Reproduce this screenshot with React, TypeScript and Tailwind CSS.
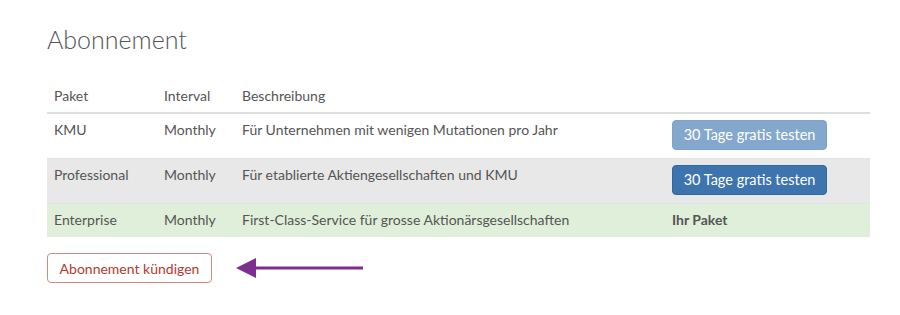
const plans = [
  {
    name: "KMU",
    interval: "Monthly",
    description: "Für Unternehmen mit wenigen Mutationen pro Jahr",
    action: "faded",
  },
  {
    name: "Professional",
    interval: "Monthly",
    description: "Für etablierte Aktiengesellschaften und KMU",
    action: "button",
  },
  {
    name: "Enterprise",
    interval: "Monthly",
    description: "First-Class-Service für grosse Aktionärsgesellschaften",
    action: "current",
  },
];

const rowBg: Record<string, string> = {
  faded: "bg-white",
  button: "bg-[#e8e8e8]",
  current: "bg-[#e0efd9]",
};

export default function App() {
  return (
    <div
      className="min-h-[315px] w-[900px] bg-white px-[47px] pt-[22px] text-[14px] text-[#555]"
      style={{ fontFamily: "Lato, 'Open Sans', sans-serif" }}
    >
      <h1 className="text-[25px] font-light leading-[34px] text-[#555]">Abonnement</h1>

      <table className="mt-[22px] w-[823px] table-fixed border-collapse">
        <colgroup>
          <col className="w-[110px]" />
          <col className="w-[78px]" />
          <col className="w-[430px]" />
          <col />
        </colgroup>
        <thead>
          <tr className="border-b-2 border-[#dedede]">
            <th className="px-[7px] pt-[9px] pb-[7px] text-left font-normal leading-[18px]">Paket</th>
            <th className="px-[7px] pt-[9px] pb-[7px] text-left font-normal leading-[18px]">Interval</th>
            <th className="px-[7px] pt-[9px] pb-[7px] text-left font-normal leading-[18px]">Beschreibung</th>
            <th />
          </tr>
        </thead>
        <tbody>
          {plans.map((plan) => (
            <tr key={plan.name} className={`${rowBg[plan.action]} border-t border-[#e3e3e3] align-top`}>
              <td className="px-[7px] py-[7px] leading-[18px]">{plan.name}</td>
              <td className="px-[7px] py-[7px] leading-[18px]">{plan.interval}</td>
              <td className="px-[7px] py-[7px] leading-[18px]">{plan.description}</td>
              <td className="px-[7px] pt-[6px] pb-[8px] leading-[18px]">
                {plan.action === "current" ? (
                  <span className="inline-block pt-px font-bold">Ihr Paket</span>
                ) : (
                  <button
                    className={`h-[30px] w-[155px] rounded-[4px] border text-[14.5px] text-white ${
                      plan.action === "faded"
                        ? "border-[#7ea3ca] bg-[#84a8cd]"
                        : "border-[#2f689f] bg-[#3e74ad]"
                    }`}
                  >
                    30 Tage gratis testen
                  </button>
                )}
              </td>
            </tr>
          ))}
        </tbody>
      </table>

      {/* cancel + pointer arrow */}
      <div className="mt-[16px] flex items-center">
        <button className="h-[30px] w-[165px] rounded-[4px] border border-[#cf8a84] bg-white text-[14px] text-[#b5392f]">
          Abonnement kündigen
        </button>
        <svg width="130" height="24" viewBox="0 0 130 24" className="ml-[24px]">
          <line x1="16" y1="12" x2="127" y2="12" stroke="#7e2e8e" strokeWidth="3" />
          <polygon points="0,12 20,2 20,22" fill="#7e2e8e" />
        </svg>
      </div>
    </div>
  );
}
